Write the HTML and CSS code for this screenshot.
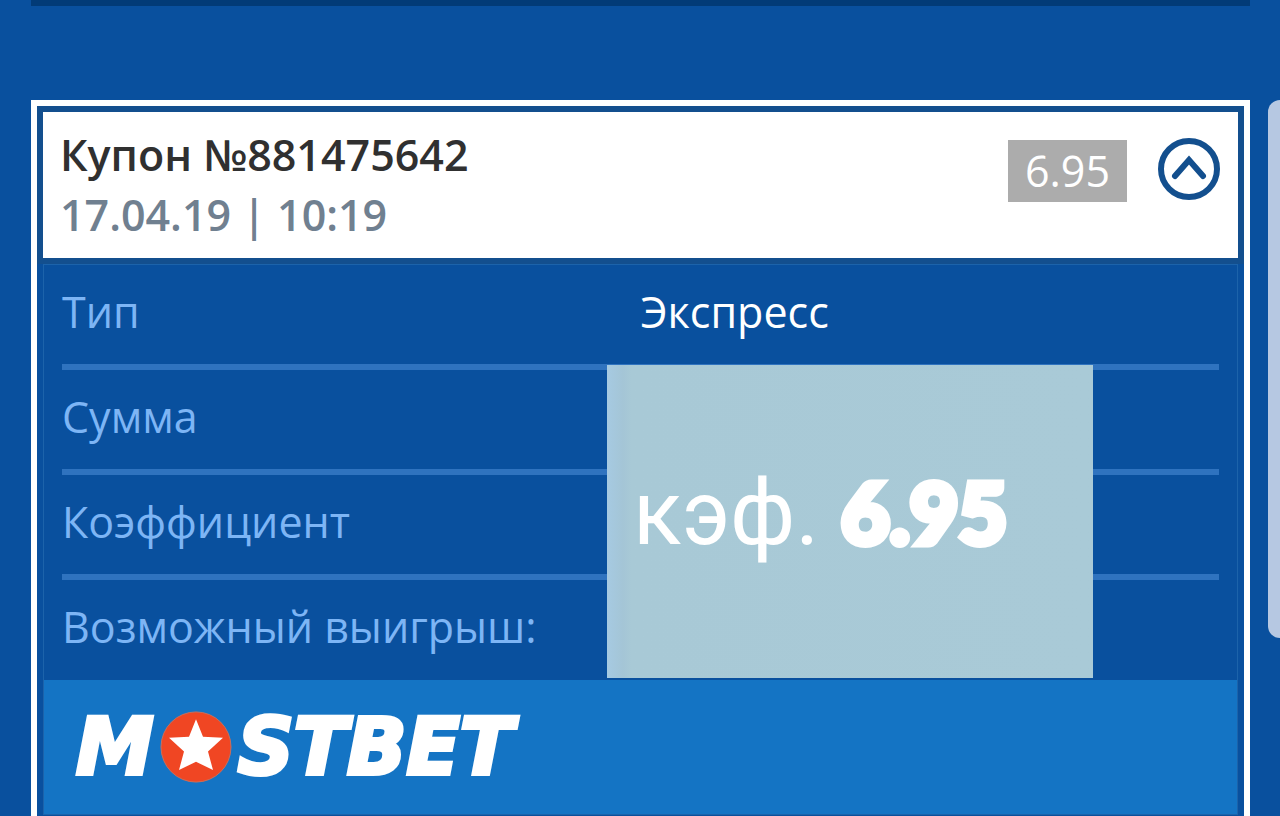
FILE: index.html
```html
<!DOCTYPE html>
<html lang="ru">
<head>
<meta charset="utf-8">
<title>Купон №881475642</title>
<meta name="viewport" content="width=device-width, initial-scale=1">
<link rel="stylesheet" href="styles.css">
</head>
<body>
<div class="page">
  <main class="column">
    <div class="previous"></div>
    <article class="coupon">
      <header class="head">
        <div class="title">
          <h1 class="number">Купон №881475642</h1>
          <p class="date">17.04.19 | 10:19</p>
        </div>
        <span class="odds">6.95</span>
        <button class="toggle" type="button" aria-label="Свернуть">
          <svg viewBox="0 0 62 62" width="62" height="62" fill="none" stroke="#134f8e">
            <circle cx="31" cy="31" r="28" stroke-width="6"/>
            <path d="M17 38 31 22 45 38" stroke-width="6" stroke-linecap="round" stroke-linejoin="miter"/>
          </svg>
        </button>
      </header>
      <section class="body">
        <dl class="details">
          <div class="row"><dt>Тип</dt><dd>Экспресс</dd></div>
          <div class="row"><dt>Сумма</dt><dd></dd></div>
          <div class="row"><dt>Коэффициент</dt><dd></dd></div>
          <div class="row"><dt>Возможный выигрыш:</dt><dd></dd></div>
        </dl>
        <p class="sticker"><span>кэф.</span><strong>6.95</strong></p>
        <footer class="brand">
          <span>M</span>
          <svg class="star" viewBox="0 0 72 78" width="72" height="72" preserveAspectRatio="none">
            <ellipse cx="36" cy="39" rx="35" ry="38" fill="#f04623" stroke="#c96f5c"/>
            <path d="M36 9 43 28 63 29 48 44 53 64 36 55 19 64 24 44 9 29 29 28Z" fill="#fff"/>
          </svg>
          <span>STBET</span>
        </footer>
      </section>
    </article>
  </main>
  <div class="scroll"></div>
</div>
</body>
</html>
```
FILE: styles.css
```css
* { box-sizing: border-box; }

body {
  margin: 0;
  background: #09509e;
  font-family: "Open Sans", "Noto Sans", sans-serif;
  font-size: 43px;
  line-height: 60px;
}

h1, p, dl, dd { margin: 0; }

.page {
  display: flex;
  gap: 18px;
  height: 100vh;
  padding-left: 31px;
  overflow: hidden;
}

.column {
  flex: 1;
  display: flex;
  flex-direction: column;
  gap: 94px;
}

.previous {
  flex: none;
  height: 6px;
  background: #023b77;
}

.coupon {
  flex: none;
  border: 6px solid #fff;
  padding-bottom: 6px;
}

.head {
  display: flex;
  align-items: flex-start;
  padding: 13px 18px 13px 17px;
  border: 6px solid #134f8e;
  background: #fff;
}

.title { flex: 1; }

.number {
  font-size: 43px;
  font-weight: 600;
  color: #303030;
}

.date {
  font-weight: 600;
  color: #708090;
}

.odds {
  margin: 15px 31px 0 0;
  padding: 0 17px;
  line-height: 62px;
  background: #acacac;
  color: #fff;
}

.toggle {
  display: flex;
  margin-top: 13px;
  padding: 0;
  border: 0;
  background: none;
}

.body {
  position: relative;
  margin: 0 6px;
  border: 1px solid #1c63aa;
}

.details { padding: 0 18px; }

.row {
  display: grid;
  grid-template-columns: 1fr 1fr;
  height: 105px;
  padding-top: 17px;
  border-bottom: 6px solid #2f73bf;
}

.row:last-child {
  height: 100px;
  border-bottom: 0;
}

dt { color: #7db5f5; }
dd { color: #fff; }

.sticker {
  position: absolute;
  top: 100px;
  right: 144px;
  display: flex;
  align-items: baseline;
  width: 486px;
  height: 313px;
  padding: 92px 0 0 26px;
  gap: 22px;
  background: linear-gradient(90deg, #a6cae2 0, #a4c5d6 16px, #a8c9d6 24px, #a9cad7 100%);
  color: #fff;
  font: 90px/110px Roboto, sans-serif;
}

.sticker strong {
  font-family: Lato, sans-serif;
  font-size: 84px;
  font-weight: 900;
  -webkit-text-stroke: 7px #fff;
}

.brand {
  display: flex;
  align-items: center;
  gap: 6px;
  height: 134px;
  padding-left: 32px;
  background: #1474c4;
  color: #fff;
  font: italic bold 78px/90px "DejaVu Sans", sans-serif;
  -webkit-text-stroke: 4px #fff;
}

.star { flex: none; }

.scroll {
  width: 12px;
  height: 538px;
  margin-top: 100px;
  border-radius: 14px 0 0 14px;
  background: #b6c8e2;
}
```
